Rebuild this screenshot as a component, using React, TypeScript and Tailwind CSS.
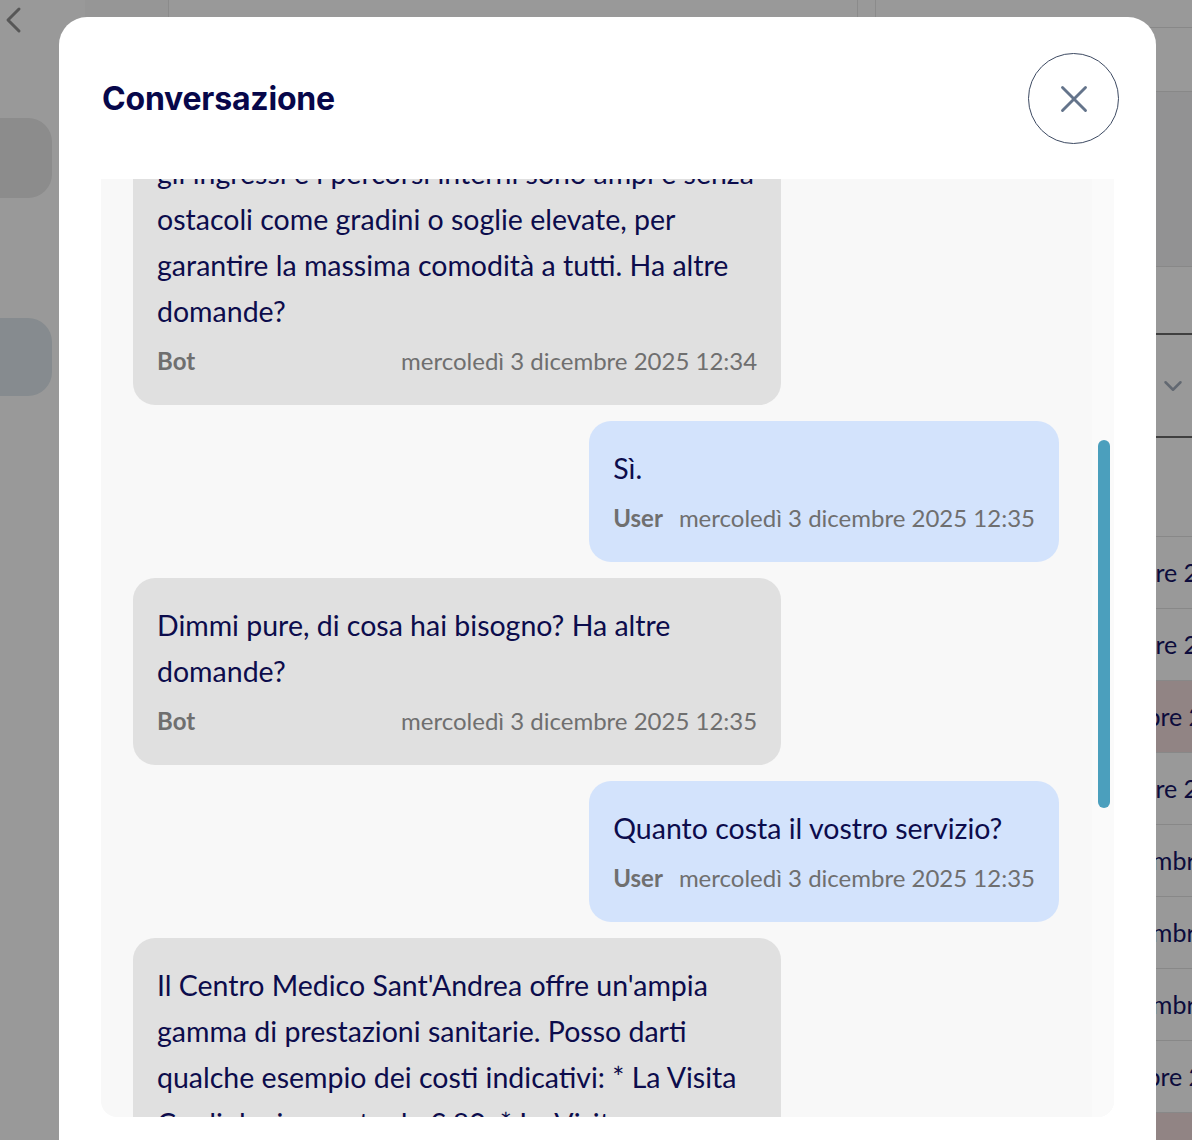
import { useLayoutEffect, useRef } from 'react';
import { X, ChevronDown } from 'lucide-react';

interface Message {
  id: number;
  from: 'bot' | 'user';
  text: string;
  time: string;
}

const MESSAGES: Message[] = [
  { id: 1, from: 'user', text: 'Buongiorno, vorrei alcune informazioni sul centro.', time: 'mercoledì 3 dicembre 2025 12:33' },
  { id: 2, from: 'bot', text: 'Buongiorno! Sono l\'assistente virtuale del Centro Medico Sant\'Andrea. Come posso aiutarla?', time: 'mercoledì 3 dicembre 2025 12:33' },
  { id: 3, from: 'user', text: 'La struttura è accessibile ai disabili?', time: 'mercoledì 3 dicembre 2025 12:34' },
  {
    id: 4,
    from: 'bot',
    text: 'Sì, la struttura è priva di barriere architettoniche:\ngli ingressi e i percorsi interni sono ampi e senza ostacoli come gradini o soglie elevate, per garantire la massima comodità a tutti. Ha altre domande?',
    time: 'mercoledì 3 dicembre 2025 12:34',
  },
  { id: 5, from: 'user', text: 'Sì.', time: 'mercoledì 3 dicembre 2025 12:35' },
  { id: 6, from: 'bot', text: 'Dimmi pure, di cosa hai bisogno? Ha altre domande?', time: 'mercoledì 3 dicembre 2025 12:35' },
  { id: 7, from: 'user', text: 'Quanto costa il vostro servizio?', time: 'mercoledì 3 dicembre 2025 12:35' },
  {
    id: 8,
    from: 'bot',
    text: 'Il Centro Medico Sant\'Andrea offre un\'ampia gamma di prestazioni sanitarie. Posso darti qualche esempio dei costi indicativi: * La Visita Cardiologica parte da € 80. * La Visita Ortopedica parte da € 90. * La Visita Dermatologica parte da € 75. Ha altre domande?',
    time: 'mercoledì 3 dicembre 2025 12:35',
  },
  { id: 9, from: 'user', text: 'No, grazie.', time: 'mercoledì 3 dicembre 2025 12:36' },
  { id: 10, from: 'bot', text: 'Grazie a lei, buona giornata!', time: 'mercoledì 3 dicembre 2025 12:36' },
];

// the "Sì." bubble sits 242px below the top of the chat window
const ANCHOR_ID = 5;
const ANCHOR_OFFSET = 242;

const TABLE_ROWS = [
  { label: '2 dicembre 2025', pad: 'pl-[179px]', alert: false },
  { label: '2 dicembre 2025', pad: 'pl-[179px]', alert: false },
  { label: '1 dicembre 2025', pad: 'pl-[184px]', alert: true },
  { label: '2 dicembre 2025', pad: 'pl-[179px]', alert: false },
  { label: '1 dicembre 2025', pad: 'pl-[210px]', alert: false },
  { label: '1 dicembre 2025', pad: 'pl-[210px]', alert: false },
  { label: '1 dicembre 2025', pad: 'pl-[210px]', alert: false },
  { label: '1 dicembre 2025', pad: 'pl-[184px]', alert: false },
  { label: '1 dicembre 2025', pad: 'pl-[184px]', alert: true },
];

function BackgroundPage() {
  return (
    <div className="flex h-full w-full">
      <div className="flex w-[85px] shrink-0 flex-col">
        <div className="h-[40px] shrink-0 pl-[3px] pt-[6px] text-[#929292]">
          <svg width="20" height="28" viewBox="0 0 20 28" fill="none">
            <path d="M16 3 L5 14 L16 25" stroke="currentColor" strokeWidth="3" strokeLinecap="round" strokeLinejoin="round" />
          </svg>
        </div>
        <div className="mt-[78px] h-[80px] w-[52px] shrink-0 rounded-r-[24px] bg-[#e9e9e9]" />
        <div className="mt-[120px] h-[78px] w-[52px] shrink-0 rounded-r-[24px] bg-[#dfe8ee]" />
      </div>
      <div className="flex flex-1 flex-col">
        <div className="flex h-[22px] shrink-0">
          <div className="w-[83px] bg-[#fbfbfb]" />
          <div className="flex-1 border-l border-[#e8e8e8]" />
          <div className="w-[19px] border-x border-[#e8e8e8]" />
        </div>
      </div>
      <div className="flex w-[316px] shrink-0 flex-col">
        <div className="h-[28px] shrink-0 border-b border-[#e3e3e3]" />
        <div className="h-[64px] shrink-0 border-b border-[#e3e3e3]" />
        <div className="h-[175px] shrink-0 border-b border-[#e3e3e3] bg-[#f4f4f6]" />
        <div className="h-[66px] shrink-0" />
        <div className="flex h-[105px] shrink-0 items-center justify-end border-y-2 border-[#6a6a6a] pr-[4px] text-[#a3aebd]">
          <ChevronDown size={30} strokeWidth={2} />
        </div>
        <div className="h-[99px] shrink-0 border-b border-[#e3e3e3]" />
        {TABLE_ROWS.map((row, i) => (
          <div
            key={i}
            className={`flex h-[72px] shrink-0 items-center border-b border-[#e3e3e3] text-[25px] whitespace-nowrap text-[#141466] ${row.pad} ${row.alert ? 'bg-[#f2dcdc]' : ''}`}
          >
            {row.label}
          </div>
        ))}
      </div>
    </div>
  );
}

function Bubble({ message }: { message: Message }) {
  const isUser = message.from === 'user';
  return (
    <div className={`flex ${isUser ? 'justify-end' : 'justify-start'}`}>
      <div
        data-id={message.id}
        className={`max-w-[70%] rounded-[22px] px-6 pt-6 pb-[27px] ${isUser ? 'bg-[#d3e3fc]' : 'bg-[#e0e0e0]'}`}
      >
        <p className="text-[28.5px] leading-[46px] whitespace-pre-line text-[#0c0c4c]">{message.text}</p>
        <div className="mt-[10px] flex justify-between gap-4 text-[24px] leading-[34px] text-[#6f6f6f]">
          <span className="font-bold">{isUser ? 'User' : 'Bot'}</span>
          <span>{message.time}</span>
        </div>
      </div>
    </div>
  );
}

export default function App() {
  const scrollRef = useRef<HTMLDivElement>(null);

  useLayoutEffect(() => {
    const el = scrollRef.current;
    if (!el) return;
    const anchor = el.querySelector<HTMLElement>(`[data-id="${ANCHOR_ID}"]`);
    if (anchor) el.scrollTop = anchor.offsetTop - ANCHOR_OFFSET;
  }, []);

  return (
    <div className="relative h-[1140px] w-[1192px] overflow-hidden bg-white font-['Lato',sans-serif]">
      <BackgroundPage />
      <div className="absolute inset-0 bg-black/40" />

      <div className="absolute inset-0 pt-[17px] pl-[59px]">
        <div className="flex h-[1160px] w-[1097px] flex-col rounded-[28px] bg-white pt-9">
          <div className="flex items-center justify-between pl-[43px] pr-[37px]">
            <h2 className="font-['Inter',sans-serif] text-[32px] font-bold tracking-[-0.2px] text-[#07074a]">
              Conversazione
            </h2>
            <button className="flex h-[91px] w-[91px] items-center justify-center rounded-full border-[1.5px] border-[#3d4a62] text-[#64748b]">
              <X size={46} strokeWidth={1.5} />
            </button>
          </div>

          <div className="relative mx-[42px] mt-[35px] h-[938px] overflow-hidden rounded-b-[16px] bg-[#f8f8f8]">
            <div
              ref={scrollRef}
              className="relative flex h-full flex-col gap-4 overflow-y-auto pt-8 pb-8 pl-8 pr-[55px] [scrollbar-width:none]"
            >
              {MESSAGES.map((m) => (
                <Bubble key={m.id} message={m} />
              ))}
            </div>
            <div className="absolute top-0 right-0 bottom-0 w-[22px] bg-[#fafafa]" />
            <div className="absolute top-[261px] right-[4px] h-[368px] w-[12px] rounded-full bg-[#4b9fbd]" />
          </div>
        </div>
      </div>
    </div>
  );
}
